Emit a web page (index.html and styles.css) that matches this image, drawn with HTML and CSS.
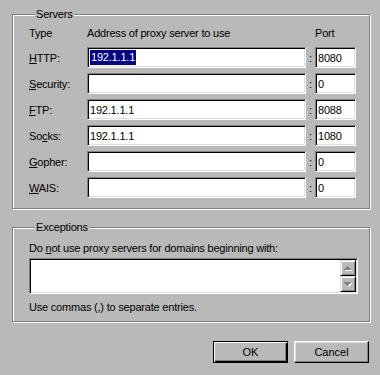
FILE: index.html
```html
<!DOCTYPE html>
<html lang="en">
<head>
  <meta charset="UTF-8">
  <title>Proxy Settings</title>
  <link rel="stylesheet" href="styles.css">
</head>
<body>
  <div class="dialog">
    <fieldset class="group servers">
      <legend>Servers</legend>
      <div class="proxy-grid">
        <span class="head">Type</span>
        <span class="head">Address of proxy server to use</span>
        <span class="head"></span>
        <span class="head">Port</span>

        <span class="row-label"><u>H</u>TTP:</span>
        <div class="field"><span class="selected">192.1.1.1</span></div>
        <span class="colon">:</span>
        <div class="field">8080</div>

        <span class="row-label"><u>S</u>ecurity:</span>
        <div class="field"></div>
        <span class="colon">:</span>
        <div class="field">0</div>

        <span class="row-label"><u>F</u>TP:</span>
        <div class="field">192.1.1.1</div>
        <span class="colon">:</span>
        <div class="field">8088</div>

        <span class="row-label">So<u>c</u>ks:</span>
        <div class="field">192.1.1.1</div>
        <span class="colon">:</span>
        <div class="field">1080</div>

        <span class="row-label"><u>G</u>opher:</span>
        <div class="field"></div>
        <span class="colon">:</span>
        <div class="field">0</div>

        <span class="row-label"><u>W</u>AIS:</span>
        <div class="field"></div>
        <span class="colon">:</span>
        <div class="field">0</div>
      </div>
    </fieldset>

    <fieldset class="group exceptions">
      <legend>Exceptions</legend>
      <p class="note">Do <u>n</u>ot use proxy servers for domains beginning with:</p>
      <div class="listbox">
        <div class="scrollbar">
          <span class="arrow">
            <svg width="8" height="5" viewBox="0 0 8 5">
              <path d="M4 1h1v1H4zM3 2h3v1H3zM2 3h5v1H2zM1 4h7v1H1z" fill="#fff"/>
              <path d="M3 0h1v1H3zM2 1h3v1H2zM1 2h5v1H1zM0 3h7v1H0z" fill="#808080"/>
            </svg>
          </span>
          <span class="arrow">
            <svg width="8" height="5" viewBox="0 0 8 5">
              <path d="M1 1h7v1H1zM2 2h5v1H2zM3 3h3v1H3zM4 4h1v1H4z" fill="#fff"/>
              <path d="M0 0h7v1H0zM1 1h5v1H1zM2 2h3v1H2zM3 3h1v1H3z" fill="#808080"/>
            </svg>
          </span>
        </div>
      </div>
      <p class="note spaced">Use commas (,) to separate entries.</p>
    </fieldset>

    <div class="actions">
      <button type="button" class="btn btn-default">OK</button>
      <button type="button" class="btn">Cancel</button>
    </div>
  </div>
</body>
</html>
```

FILE: styles.css
```css
body {
  margin: 0;
  background-color: #b9b9b9;
  font-family: "Liberation Sans", Arial, sans-serif;
  font-size: 11px;
  letter-spacing: -0.2px;
  color: #000;
}

.dialog {
  width: 380px;
  height: 375px;
  padding-top: 7px;
  box-sizing: border-box;
}

/* etched group box */
.group {
  margin: 0 0 0 12px;
  width: 358px;
  min-width: 0;
  box-sizing: border-box;
  border: 1px solid #808080;
  box-shadow: inset 1px 1px 0 #fff, 1px 1px 0 #fff;
}

.group legend {
  margin-left: 6px;
  padding: 0 1px;
  line-height: 14px;
  background-color: #b9b9b9;
}

.servers {
  padding: 5px 13px 10px 16px;
}

.proxy-grid {
  display: grid;
  grid-template-columns: 58px 219px 9px 41px;
  grid-template-rows: 16px repeat(6, 21px);
  row-gap: 5px;
  align-items: center;
}

.head {
  align-self: start;
  line-height: 14px;
}

.colon {
  text-align: center;
}

/* sunken edit box */
.field {
  height: 21px;
  box-sizing: border-box;
  display: flex;
  align-items: center;
  padding: 0 2px;
  background-color: #fff;
  border: 1px solid;
  border-color: #808080 #fff #fff #808080;
  box-shadow: inset 1px 1px 0 #000, inset -1px -1px 0 #dfdfdf;
  white-space: nowrap;
}

.selected {
  display: inline-block;
  line-height: 15px;
  padding: 0 1px;
  background-color: #000080;
  color: #fff;
}

.exceptions {
  margin-top: 11px;
  padding: 7px 11px 7px 16px;
}

.note {
  margin: 0;
  line-height: 14px;
}

.note.spaced {
  margin-top: 6px;
}

.listbox {
  width: 329px;
  height: 36px;
  margin-top: 3px;
  box-sizing: border-box;
  padding: 1px;
  display: flex;
  justify-content: flex-end;
  background-color: #fff;
  border: 1px solid;
  border-color: #808080 #fff #fff #808080;
  box-shadow: inset 1px 1px 0 #000, inset -1px -1px 0 #dfdfdf;
}

.scrollbar {
  width: 16px;
  display: flex;
  flex-direction: column;
}

.arrow {
  height: 16px;
  box-sizing: border-box;
  display: flex;
  align-items: center;
  justify-content: center;
  background-color: #b9b9b9;
  border: 1px solid;
  border-color: #dfdfdf #000 #000 #dfdfdf;
  box-shadow: inset 1px 1px 0 #fff, inset -1px -1px 0 #808080;
}

.actions {
  display: flex;
  justify-content: flex-end;
  gap: 6px;
  margin-top: 19px;
  padding-right: 11px;
}

.btn {
  width: 75px;
  height: 22px;
  padding: 0;
  font: inherit;
  color: #000;
  background-color: #b9b9b9;
  border: 1px solid;
  border-color: #fff #000 #000 #fff;
  box-shadow: inset -1px -1px 0 #808080, inset 1px 1px 0 #dfdfdf;
}

.btn-default {
  border-color: #000;
  box-shadow: inset 1px 1px 0 #fff, inset -1px -1px 0 #000, inset -2px -2px 0 #808080;
}
```
